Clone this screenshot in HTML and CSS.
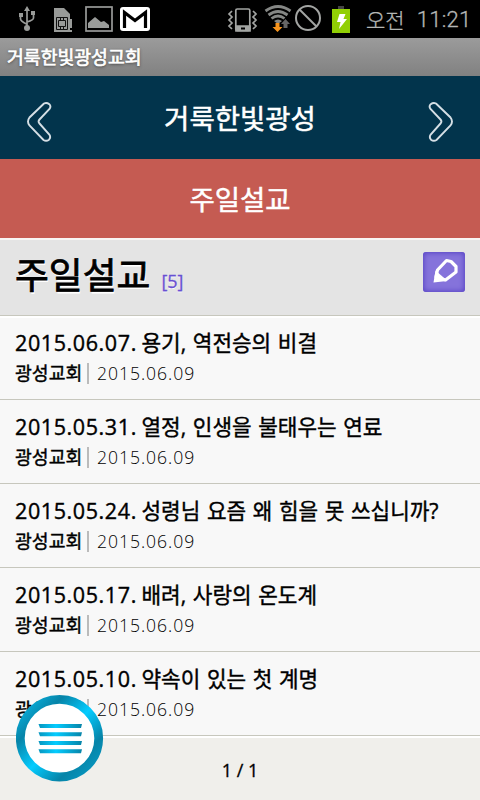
FILE: index.html
```html
<!DOCTYPE html>
<html lang="ko">
<head>
<meta charset="utf-8">
<title>거룩한빛광성교회</title>
<link rel="stylesheet" href="styles.css">
</head>
<body>
<div class="status">
<svg class="icons" viewBox="0 0 360 38" width="360" height="38">
<g fill="none" stroke="#999b99" stroke-width="1.7">
<path d="M27 27V9M20.500 16v3q0 2 6 5M33.500 15v3q0 2-6.500 4"/>
<path fill="#999b99" stroke="none" d="M27 6l-3 5h6zM19 13h4v4h-4zM31 11h4v4h-4z"/>
<circle cx="27" cy="28" r="3" fill="#999b99" stroke="none"/>
<path fill="#999b99" stroke="none" d="M54 8h10l6 6v18H54z"/>
<path stroke="#111" stroke-width="1" d="M56.500 17.500h11v12h-11zM58.500 20.500h7v6h-7zM60.500 17v3M63.500 17v3M60.500 27v3M63.500 27v3"/>
<path stroke="#999b99" stroke-width="2" d="M71 19v9M71 30v2"/>
<rect x="86" y="7" width="26" height="24"/>
<path fill="#999b99" stroke="none" d="M88 28v-5l7-6 6 5 3-1 5 4v3z"/>
</g>
<rect x="120" y="7" width="30" height="24" rx="3" fill="#fff"/>
<path d="M124.500 28V12.500L135 20.500 145.500 12.500V28" fill="none" stroke="#000" stroke-width="3.200"/>
<g fill="none" stroke="#a3a5a3" stroke-width="1.700">
<rect x="235.800" y="9" width="14" height="21.500" rx="1.500"/>
<path fill="#a3a5a3" d="M236 26h14v5h-14z"/><path stroke="#000" stroke-width="2" d="M241 28.500h4"/>
<path d="M232 11l-3 3 3 3-3 3 3 3-3 3 3 3M253 11l3 3-3 3 3 3-3 3 3 3-3 3"/>
<g stroke="#858785" stroke-width="2.800"><path d="M265.500 11q12.500-9 25 0M268.500 15q9.500-7 19 0M271.500 18.500q6.500-5 13 0"/></g>
<path fill="#858785" stroke="none" d="M274 21q4-3 8 0l-4 3z"/>
<path fill="#f7941d" stroke="none" d="M275.500 23h4v4h3l-5 5-5-5h3z"/>
<path fill="#666" stroke="none" d="M283.500 28v-4h-2.500l4.500-5 4.500 5H287.500v4z"/>
<circle cx="308" cy="18" r="12" stroke-width="2"/><path stroke-width="2" d="M299.500 9.500l17 17"/>
</g>
<path fill="#444" d="M338 6h6v3h-6z"/><path fill="#91cf05" d="M332 9h18v24h-18z"/>
<path fill="#fff" d="M339.500 14h6l-2 5h3.500l-8 10 1.500-7H337z"/>
</svg>
<span class="clock"><span class="am">오전</span><span class="time">11:21</span></span>
</div>
<div class="appbar">거룩한빛광성교회</div>
<div class="nav">
<svg width="26" height="42" viewBox="0 0 26 42"><path d="M18 2.500L3.500 16.500q-3 4 0 8L17.500 39q2.800 1.800 5.500-.3 2.200-2.300.3-5.200L13.500 22.500q-1.800-2 0-4L23.500 8q1.900-2.700-.2-4.800-2.600-2-5.300-.7z"/></svg>
<span>거룩한빛광성</span>
<svg class="next" width="26" height="42" viewBox="0 0 26 42"><path d="M18 2.500L3.500 16.500q-3 4 0 8L17.500 39q2.800 1.800 5.500-.3 2.200-2.300.3-5.200L13.500 22.500q-1.800-2 0-4L23.500 8q1.900-2.700-.2-4.800-2.600-2-5.300-.7z"/></svg>
</div>
<div class="tab">주일설교</div>
<div class="head"><span class="h">주일설교</span><span class="count">[5]</span>
<span class="edit"><svg width="42" height="40" viewBox="0 0 42 40"><path d="M13 25l1.500-7L23.500 8.500l4.500 1 5 5v5.500L22.500 28z" fill="none" stroke="#fff" stroke-width="3.200" stroke-linejoin="round"/><path fill="#fff" d="M10.500 30.500l2-12 3.500 3 4 3.500 4 4z"/></svg></span></div>
<div class="list">
<div class="row"><div class="title"><span class="d">2015.06.07.</span><span>용기, 역전승의 비결</span></div><div class="meta"><span class="who">광성교회</span><span class="date">2015.06.09</span></div></div>
<div class="row"><div class="title"><span class="d">2015.05.31.</span><span>열정, 인생을 불태우는 연료</span></div><div class="meta"><span class="who">광성교회</span><span class="date">2015.06.09</span></div></div>
<div class="row"><div class="title"><span class="d">2015.05.24.</span><span>성령님 요즘 왜 힘을 못 쓰십니까?</span></div><div class="meta"><span class="who">광성교회</span><span class="date">2015.06.09</span></div></div>
<div class="row"><div class="title"><span class="d">2015.05.17.</span><span>배려, 사랑의 온도계</span></div><div class="meta"><span class="who">광성교회</span><span class="date">2015.06.09</span></div></div>
<div class="row"><div class="title"><span class="d">2015.05.10.</span><span>약속이 있는 첫 계명</span></div><div class="meta"><span class="who">광성교회</span><span class="date">2015.06.09</span></div></div>
</div>
<div class="foot">1 / 1</div>
<svg class="menu" width="88" height="88" viewBox="0 0 88 88">
<defs>
<linearGradient id="r" gradientUnits="userSpaceOnUse" x1="10" y1="12" x2="76" y2="78"><stop offset="0" stop-color="#08a9d5"/><stop offset=".2" stop-color="#0784a8"/><stop offset=".5" stop-color="#04ccff"/><stop offset=".8" stop-color="#0784a8"/><stop offset="1" stop-color="#0796bf"/></linearGradient>
<linearGradient id="b" x1="0" x2="1"><stop stop-color="#0796bf"/><stop offset=".4" stop-color="#04ccff"/><stop offset="1" stop-color="#0784a8"/></linearGradient></defs>
<ellipse cx="43.500" cy="43.200" rx="39.200" ry="38.800" fill="#fff" stroke="url(#r)" stroke-width="8.800"/>
<path fill="url(#b)" d="M22.500 29h43.500l-1 4H24zM22.500 37.300h43.500l-1 4H24zM22.500 46h43.500l-1 4H24zM22.500 54.200h43.500l-1 4H24z"/>
</svg>
</body>
</html>
```
FILE: styles.css
```css
* { box-sizing: border-box; }
body { margin: 0; width: 480px; height: 800px; overflow: hidden; position: relative; background: #f8f8f8; color: #000; font-family: "Open Sans", "Noto Sans CJK KR", sans-serif; }
svg { display: block; flex: none; }
.status { height: 38px; background: #000; display: flex; color: #b4b6b4; }
.clock { display: flex; padding-left: 6px; gap: 12px; font: 21px/39px "Noto Sans CJK KR", sans-serif; font-weight: 300; white-space: nowrap; -webkit-text-stroke: .3px #b4b6b4; }
.time { font-family: Roboto, sans-serif; font-size: 22px; font-weight: 300; letter-spacing: .3px; }
.appbar { height: 38px; padding-left: 7px; background: linear-gradient(#9b9b9b, #818181); color: #fff; font-size: 18.300px; line-height: 37px; -webkit-text-stroke: .7px #fff; text-shadow: 0 1px 3px #333; }
.nav { height: 83px; background: #02344c; color: #fff; display: flex; align-items: center; justify-content: space-between; padding: 8px 26px 0; font-size: 27.500px; -webkit-text-stroke: .5px #fff; }
.nav span { line-height: 40px; margin-top: -6px; }
.nav path { fill: none; stroke: #d5dfe5; stroke-width: 1.900; }
.next { transform: scaleX(-1); }
.tab { height: 79px; background: #c55b52; color: #fff; text-align: center; font-size: 27.500px; line-height: 81px; -webkit-text-stroke: .5px #fff; }
.head { height: 78px; border-top: 2px solid #f8f5f4; border-bottom: 1px solid #c7c7bd; background: #e4e4e4; padding: 0 15px; display: flex; }
.h { font-size: 36.800px; line-height: 71px; -webkit-text-stroke: .8px #000; text-shadow: 1px 2px 0 #fff; }
.count { margin: 14px 0 0 11px; color: #6950d2; font-size: 18px; line-height: 54px; text-shadow: 0 1px 0 #fff; -webkit-text-stroke: .3px #6950d2; }
.edit { width: 42px; height: 40px; margin: 12px 0 0 auto; border-radius: 3px; background: #8573db; box-shadow: inset 0 0 5px 1px #5945c5; }
.row { height: 84px; border-bottom: 1px solid #c7c7bd; padding: 12px 15px 0; background: #f8f8f8; white-space: nowrap; }
.row:first-child { box-shadow: inset 0 2px #fff; }
.title { height: 30px; line-height: 30px; font-size: 21.300px; word-spacing: 1.100px; display: flex; -webkit-text-stroke: .4px #000; }
.d { width: 126.500px; font-size: 21.500px; letter-spacing: .6px; }
.meta { height: 30px; display: flex; align-items: center; }
.who { width: 74px; height: 21px; border-right: 2px solid #bbb; font-size: 18.300px; line-height: 20px; -webkit-text-stroke: .4px #000; }
.date { padding-left: 8px; font-size: 17.600px; line-height: 28px; font-weight: 300; letter-spacing: .95px; }
.foot { height: 64px; border-top: 2px solid #fff; background: #f0efeb; text-align: center; font-size: 18px; line-height: 65px; -webkit-text-stroke: .3px #000; }
.menu { position: absolute; left: 16px; top: 695px; }
```
